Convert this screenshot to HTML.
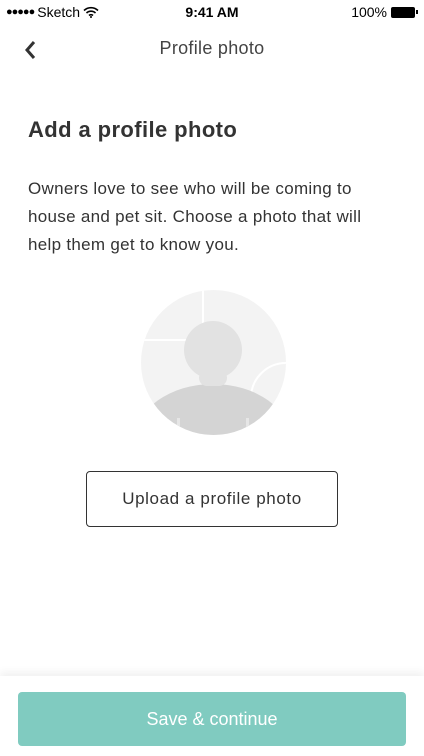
<!DOCTYPE html>
<html><head><meta charset="utf-8"><style>
*{margin:0;padding:0;box-sizing:border-box}
body{width:424px;height:756px;background:#fff;font-family:"Liberation Sans",sans-serif;color:#333;position:relative;overflow:hidden}
.abs{position:absolute}
</style></head><body>
<div class="abs" style="left:6px;top:4px;font-size:14px;color:#000;display:flex;align-items:center;gap:3px">
<span style="letter-spacing:-1px;font-size:11px">●●●●●</span><span>Sketch</span>
<svg width="16" height="12" viewBox="0 0 16 12"><path d="M1 4.5a10 10 0 0 1 14 0M3.5 7a6.5 6.5 0 0 1 9 0M6 9.5a3 3 0 0 1 4 0" stroke="#000" stroke-width="1.6" fill="none"/><circle cx="8" cy="11" r="1" fill="#000"/></svg>
</div>
<div class="abs" style="left:0;width:424px;top:4px;text-align:center;font-size:14px;font-weight:bold;color:#000">9:41 AM</div>
<div class="abs" style="right:6px;top:4px;font-size:14px;color:#000;display:flex;align-items:center;gap:4px">100%
<span style="display:inline-block;width:24px;height:11px;background:#000;border-radius:2px"></span><span style="display:inline-block;width:2px;height:4px;background:#000;margin-left:-3px"></span></div>
<svg class="abs" style="left:24px;top:40px" width="14" height="20" viewBox="0 0 14 20"><path d="M10 2 L3 10 L10 18" stroke="#333" stroke-width="3" fill="none"/></svg>
<div class="abs" style="left:0;width:424px;top:38px;text-align:center;font-size:18px;color:#444;letter-spacing:0.3px">Profile photo</div>
<div class="abs" style="left:28px;top:117px;font-size:22px;font-weight:bold;color:#333;letter-spacing:0.4px">Add a profile photo</div>
<div class="abs" style="left:28px;top:175px;width:362px;font-size:17px;line-height:28px;color:#333;letter-spacing:0.3px">Owners love to see who will be coming to house and pet sit. Choose a photo that will help them get to know you.</div>
<svg class="abs" style="left:141px;top:290px" width="145" height="145" viewBox="0 0 145 145">
<defs><clipPath id="c"><circle cx="72.5" cy="72.5" r="72.5"/></clipPath></defs>
<g clip-path="url(#c)">
<rect width="145" height="145" fill="#f3f3f3"/>
<path d="M62 0 V50 H0" stroke="#fff" stroke-width="2" fill="none"/>
<circle cx="145" cy="108" r="35" stroke="#fff" stroke-width="2" fill="none"/>
<ellipse cx="72" cy="150" rx="78" ry="56" fill="#d4d4d4"/>
<rect x="58" y="80" width="28" height="16" rx="8" fill="#e2e2e2"/>
<circle cx="72" cy="60" r="29" fill="#e2e2e2"/>
<rect x="36" y="128" width="3" height="17" fill="#e6e6e6"/>
<rect x="105" y="128" width="3" height="17" fill="#e6e6e6"/>
</g></svg>
<div class="abs" style="left:86px;top:471px;width:252px;height:56px;border:1px solid #333;border-radius:4px;text-align:center;line-height:54px;font-size:17px;color:#333;letter-spacing:0.6px">Upload a profile photo</div>
<div class="abs" style="left:0;top:676px;width:424px;height:80px;background:#fff;box-shadow:0 -4px 8px rgba(0,0,0,0.06)"></div>
<div class="abs" style="left:18px;top:692px;width:388px;height:54px;background:#80cbc0;border-radius:4px;text-align:center;line-height:54px;font-size:18px;color:#fff">Save &amp; continue</div>
</body></html>
